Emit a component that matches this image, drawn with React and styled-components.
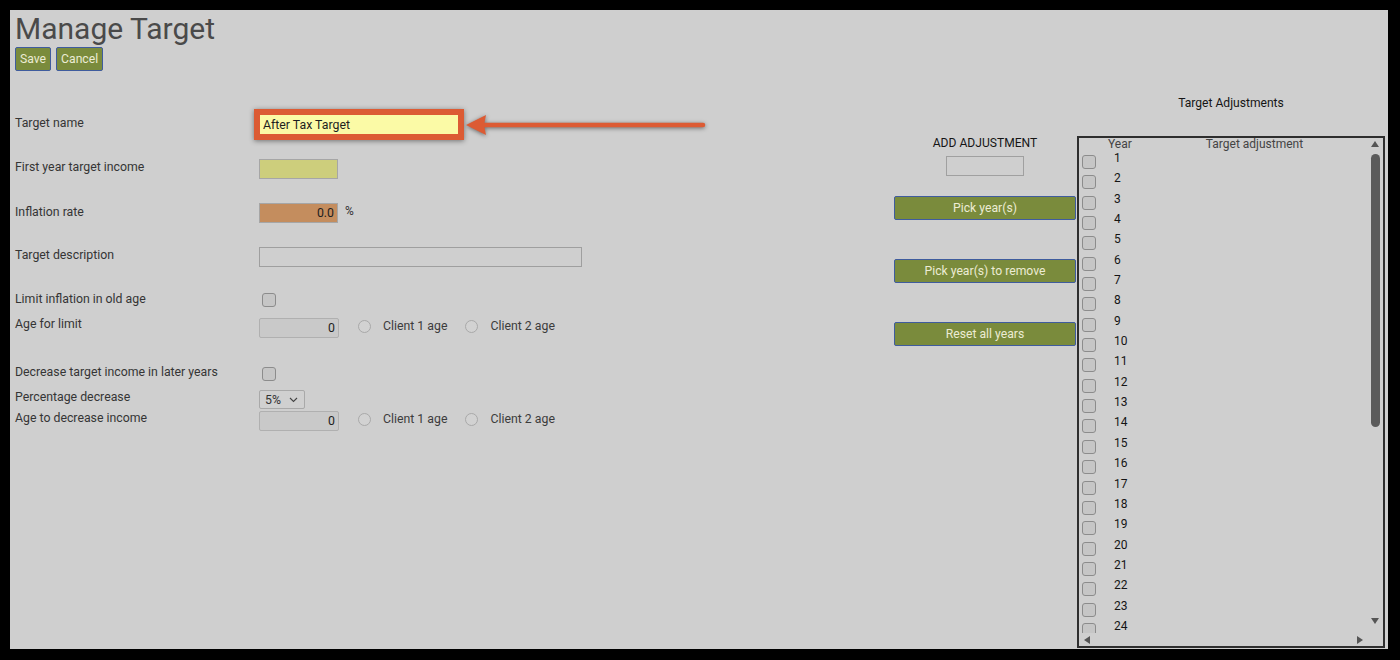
import React from "react";
import styled, { createGlobalStyle } from "styled-components";

const Global = createGlobalStyle`
  html, body { margin: 0; padding: 0; background: #000; }
  body { font-family: Roboto, "Liberation Sans", Arial, sans-serif; }
  * { box-sizing: border-box; }
`;

const Page = styled.div`
  width: 1378px;
  height: 639px;
  margin: 10px 0 0 10px;
  background: #cfcfcf;
  padding: 1px 3px 0 5px;
  display: flex;
  flex-direction: column;
  overflow: hidden;
`;

const Title = styled.h1`
  margin: 0;
  font-size: 30px;
  font-weight: 400;
  line-height: 35px;
  color: #4a4a4a;
`;

const ButtonRow = styled.div`
  display: flex;
  gap: 5px;
  margin-top: 1px;
`;

const GreenButton = styled.button`
  height: 24px;
  padding: 0 4px;
  width: ${(p) => (p.$full ? "100%" : "auto")};
  background: #7a8b3c;
  border: 1.5px solid #3f5c9e;
  border-radius: 2px;
  color: #ecebd4;
  font-family: Roboto, sans-serif;
  font-size: 12.2px;
  cursor: pointer;
`;

const Body = styled.div`
  display: flex;
  flex: 1;
`;

const Form = styled.div`
  width: 879px;
  padding-top: 43px;
  display: flex;
  flex-direction: column;
`;

const Row = styled.div`
  display: flex;
  align-items: flex-start;
  height: ${(p) => p.$h}px;
`;

const Label = styled.div`
  width: 244px;
  padding-top: 1px;
  font-size: 12.3px;
  line-height: 16px;
  color: #353535;
`;

const Control = styled.div`
  position: relative;
  display: flex;
  align-items: center;
  margin-top: ${(p) => p.$dy || 0}px;
`;

const TextInput = styled.input`
  width: ${(p) => p.$w}px;
  height: ${(p) => p.$h || 20}px;
  padding: 0 3px;
  background: ${(p) => p.$bg || "#cfcfcf"};
  border: 1px solid ${(p) => (p.$highlight ? "#dc5b34" : p.$border || "#a6a6a6")};
  border-radius: ${(p) => (p.$round ? 2 : 0)}px;
  font-family: Roboto, sans-serif;
  font-size: 12.3px;
  color: #1e1e1e;
  text-align: ${(p) => p.$align || "left"};
  outline: none;
  box-shadow: ${(p) =>
    p.$highlight
      ? "0 0 0 5px #dc5b34, 0 1px 5px 5px rgba(0,0,0,0.45)"
      : "none"};
`;

const Unit = styled.span`
  margin-left: 7px;
  margin-top: -4px;
  font-size: 12px;
  color: #333;
`;

const Arrow = styled.svg`
  position: absolute;
  left: 207px;
  top: -1px;
  overflow: visible;
  filter: drop-shadow(0 1px 2px rgba(0, 0, 0, 0.5));
`;

const Check = styled.span`
  display: inline-block;
  width: 14px;
  height: 14px;
  margin-left: ${(p) => p.$ml ?? 3}px;
  margin-top: ${(p) => p.$mt || 0}px;
  border: 1px solid #8c8c8c;
  border-radius: 3px;
  background: #c6c6c6;
  flex-shrink: 0;
`;

const RadioOption = styled.label`
  display: inline-flex;
  align-items: center;
  margin-left: ${(p) => p.$ml}px;
  margin-bottom: 4px;
  font-size: 12.3px;
  color: #3c3c3c;
`;

const RadioDot = styled.span`
  width: 13px;
  height: 13px;
  border-radius: 50%;
  border: 1px solid #a9a9a9;
  background: #d2d2d2;
  margin-right: 12px;
`;

const SelectBox = styled.div`
  width: 46px;
  height: 19px;
  border: 1px solid #a9a9a9;
  border-radius: 2px;
  background: #d0d0d0;
  display: flex;
  align-items: center;
  justify-content: space-between;
  padding: 0 6px 0 5px;
  font-size: 12.3px;
  color: #333;
`;

const MiddleColumn = styled.div`
  width: 182px;
  padding-top: 64px;
  display: flex;
  flex-direction: column;
  align-items: center;
`;

const SectionLabel = styled.div`
  font-size: 12.1px;
  line-height: 16px;
  color: #151515;
  text-align: center;
`;

const AdjInput = styled.input`
  width: 78px;
  height: 20px;
  margin-top: 5px;
  border: 1px solid #a0a0a0;
  background: #cfcfcf;
  outline: none;
`;

const ButtonStack = styled.div`
  width: 100%;
  margin-top: 20px;
  display: flex;
  flex-direction: column;
  gap: 39px;
`;

const TableSection = styled.div`
  width: 308px;
  margin-left: 1px;
  padding-top: 24px;
  display: flex;
  flex-direction: column;
`;

const TableTitle = styled(SectionLabel)`
  margin-bottom: 25px;
`;

const TableBox = styled.div`
  height: 512px;
  border: 2px solid #2e2e2e;
  display: grid;
  grid-template-columns: 1fr 16px;
  grid-template-rows: 1fr 13px;
  overflow: hidden;
`;

const Rows = styled.div`
  overflow: hidden;
`;

const HeaderRow = styled.div`
  display: flex;
  height: 12px;
  line-height: 13px;
  font-size: 12px;
  color: #444;
`;

const HeadCell = styled.span`
  margin-left: ${(p) => p.$ml}px;
`;

const YearRow = styled.div`
  display: flex;
  align-items: flex-start;
  height: 20.35px;
`;

const YearNum = styled.span`
  margin-left: 18px;
  padding-top: 1px;
  line-height: 14px;
  font-size: 12px;
  color: #141414;
`;

const VScroll = styled.div`
  display: flex;
  flex-direction: column;
  align-items: center;
  padding: 3px 0 9px;
`;

const Thumb = styled.div`
  width: 9px;
  height: 273px;
  margin-top: 7px;
  border-radius: 5px;
  background: #5b5b5b;
`;

const TriUp = styled.span`
  width: 0;
  height: 0;
  border-left: 4.5px solid transparent;
  border-right: 4.5px solid transparent;
  border-bottom: 6px solid #555;
  margin-top: ${(p) => (p.$end ? "auto" : "0")};
  transform: ${(p) => (p.$down ? "rotate(180deg)" : "none")};
`;

const HScroll = styled.div`
  display: flex;
  align-items: center;
  justify-content: space-between;
  padding: 0 4px 0 5px;
`;

const TriSide = styled.span`
  width: 0;
  height: 0;
  border-top: 4.5px solid transparent;
  border-bottom: 4.5px solid transparent;
  ${(p) =>
    p.$right
      ? "border-left: 6px solid #555;"
      : "border-right: 6px solid #555;"}
`;

function Chevron() {
  return (
    <svg width="9" height="6" viewBox="0 0 9 6">
      <path d="M1 1 L4.5 4.5 L8 1" fill="none" stroke="#444" strokeWidth="1.1" />
    </svg>
  );
}

function AgeRadios() {
  return (
    <>
      <RadioOption $ml={19}>
        <RadioDot />
        Client 1 age
      </RadioOption>
      <RadioOption $ml={18}>
        <RadioDot />
        Client 2 age
      </RadioOption>
    </>
  );
}

export default function App() {
  const years = Array.from({ length: 24 }, (_, i) => i + 1);
  return (
    <>
      <Global />
      <Page>
        <Title>Manage Target</Title>
        <ButtonRow>
          <GreenButton>Save</GreenButton>
          <GreenButton>Cancel</GreenButton>
        </ButtonRow>
        <Body>
          <Form>
            <Row $h={44}>
              <Label>Target name</Label>
              <Control $dy={0}>
                <TextInput $w={200} $h={21} $bg="#fbfaa6" $highlight defaultValue="After Tax Target" />
                <Arrow width="240" height="24" viewBox="0 0 240 24">
                  <line x1="16" y1="12" x2="237" y2="12" stroke="#dc5b34" strokeWidth="4.5" strokeLinecap="round" />
                  <polygon points="0,12 20,2 18,12 20,22" fill="#dc5b34" />
                </Arrow>
              </Control>
            </Row>
            <Row $h={45}>
              <Label>First year target income</Label>
              <Control $dy={1}>
                <TextInput $w={79} $bg="#cdce7c" />
              </Control>
            </Row>
            <Row $h={43}>
              <Label>Inflation rate</Label>
              <Control $dy={0}>
                <TextInput $w={79} $bg="#c48d5e" $align="right" defaultValue="0.0" />
                <Unit>%</Unit>
              </Control>
            </Row>
            <Row $h={44}>
              <Label>Target description</Label>
              <Control $dy={1}>
                <TextInput $w={323} $border="#9f9f9f" />
              </Control>
            </Row>
            <Row $h={25}>
              <Label>Limit inflation in old age</Label>
              <Control $dy={3}>
                <Check />
              </Control>
            </Row>
            <Row $h={48}>
              <Label>Age for limit</Label>
              <Control $dy={3}>
                <TextInput $w={80} $bg="#c9c9c9" $border="#b0b0b0" $round $align="right" defaultValue="0" />
                <AgeRadios />
              </Control>
            </Row>
            <Row $h={25}>
              <Label>Decrease target income in later years</Label>
              <Control $dy={4}>
                <Check />
              </Control>
            </Row>
            <Row $h={21}>
              <Label>Percentage decrease</Label>
              <Control $dy={2}>
                <SelectBox>
                  5%
                  <Chevron />
                </SelectBox>
              </Control>
            </Row>
            <Row $h={30}>
              <Label>Age to decrease income</Label>
              <Control $dy={2}>
                <TextInput $w={80} $bg="#c9c9c9" $border="#b0b0b0" $round $align="right" defaultValue="0" />
                <AgeRadios />
              </Control>
            </Row>
          </Form>

          <MiddleColumn>
            <SectionLabel>ADD ADJUSTMENT</SectionLabel>
            <AdjInput />
            <ButtonStack>
              <GreenButton $full>Pick year(s)</GreenButton>
              <GreenButton $full>Pick year(s) to remove</GreenButton>
              <GreenButton $full>Reset all years</GreenButton>
            </ButtonStack>
          </MiddleColumn>

          <TableSection>
            <TableTitle>Target Adjustments</TableTitle>
            <TableBox>
              <Rows>
                <HeaderRow>
                  <HeadCell $ml={29}>Year</HeadCell>
                  <HeadCell $ml={74}>Target adjustment</HeadCell>
                </HeaderRow>
                {years.map((y) => (
                  <YearRow key={y}>
                    <Check $mt={5} />
                    <YearNum>{y}</YearNum>
                  </YearRow>
                ))}
              </Rows>
              <VScroll>
                <TriUp />
                <Thumb />
                <TriUp $end $down />
              </VScroll>
              <HScroll>
                <TriSide />
                <TriSide $right />
              </HScroll>
              <div />
            </TableBox>
          </TableSection>
        </Body>
      </Page>
    </>
  );
}
